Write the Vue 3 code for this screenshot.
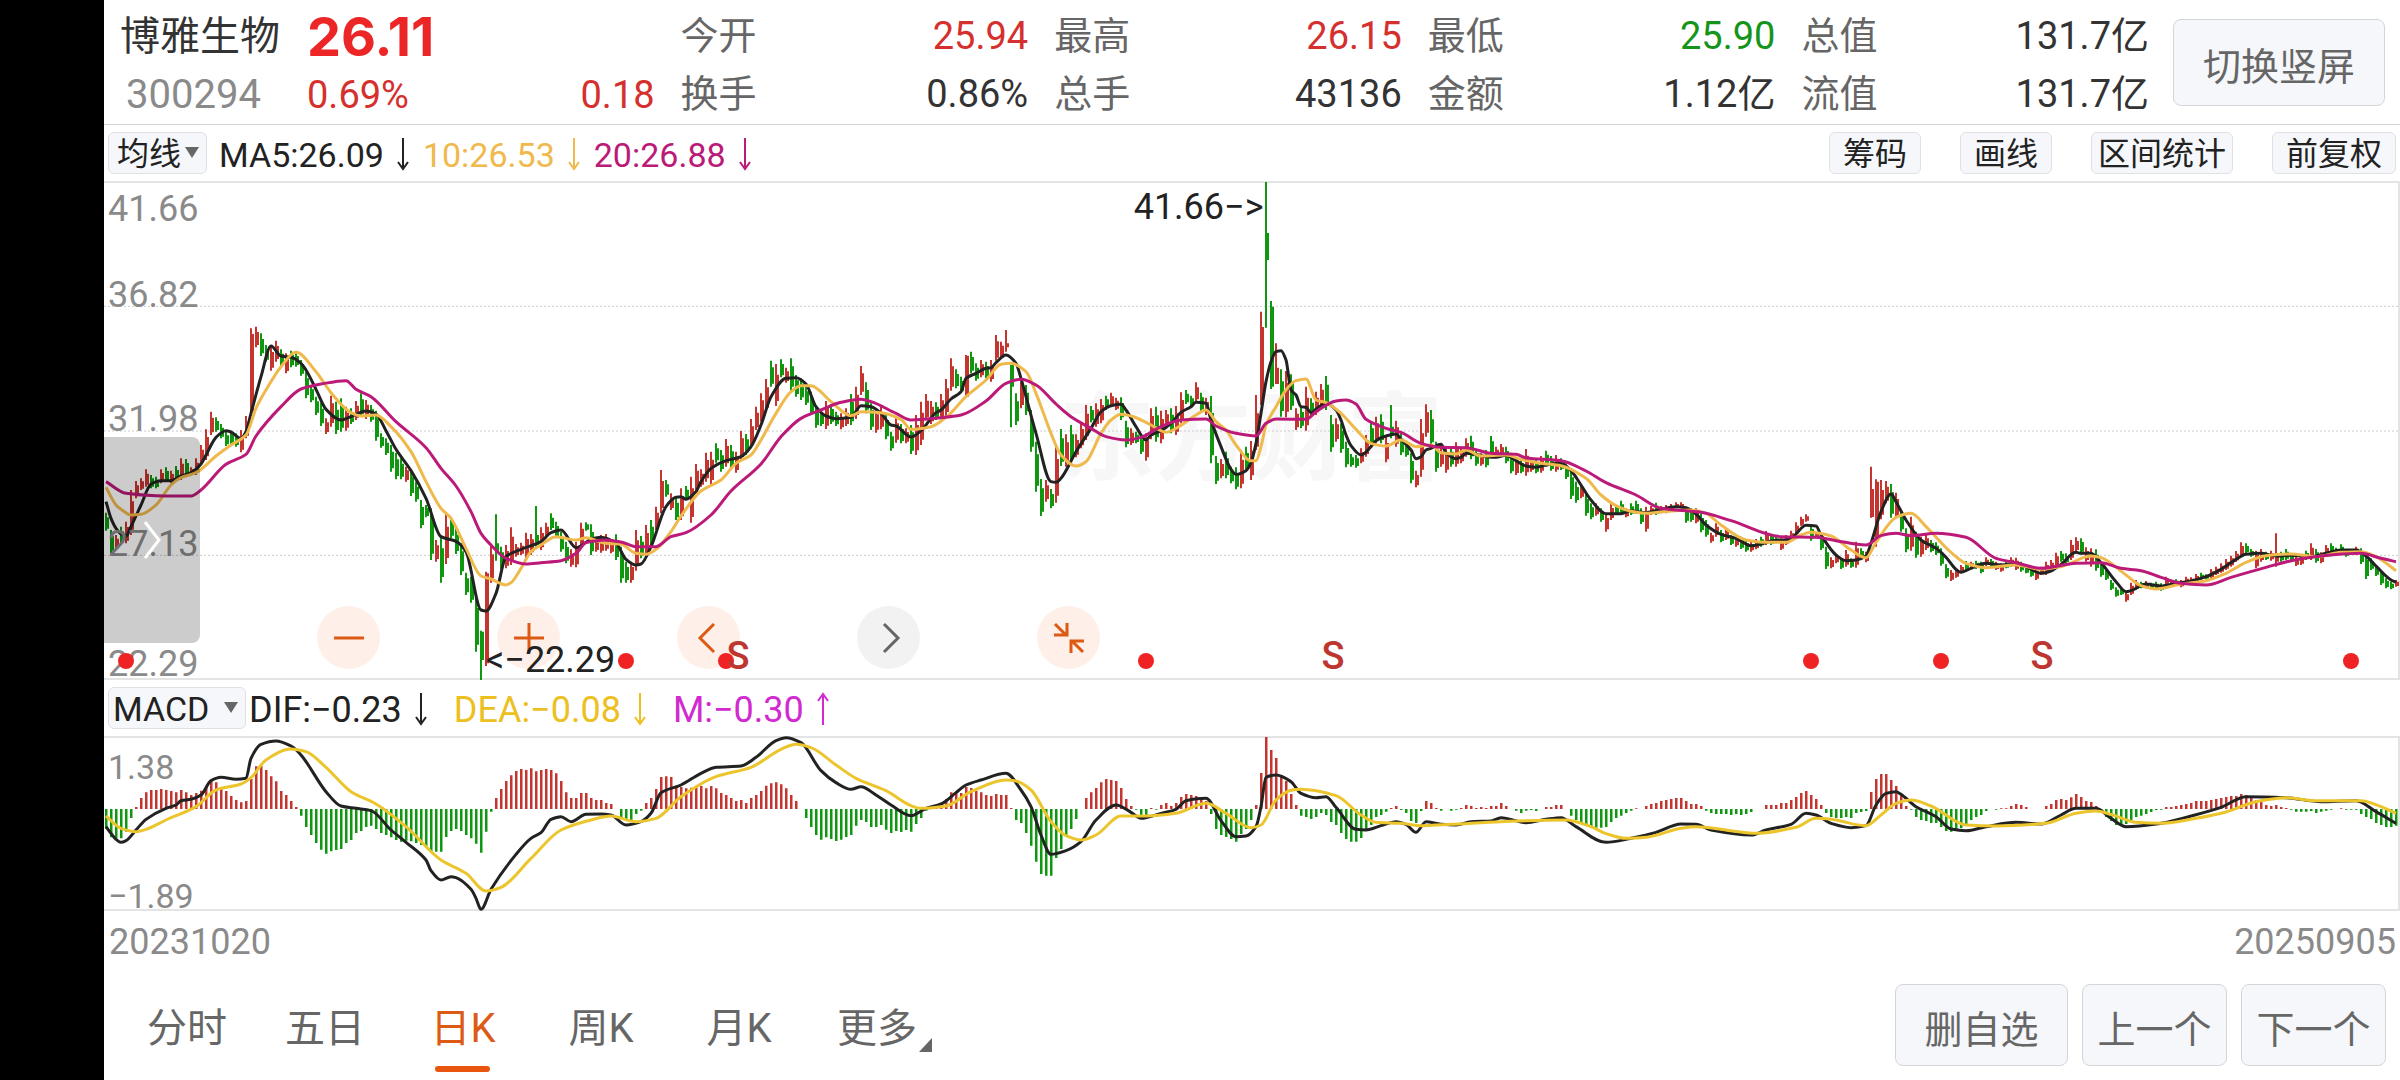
<template>
  <div class="screen">
    <main class="stock">
      <header class="quote">
        <div class="name">
          <h1>博雅生物</h1>
          <span>300294</span>
        </div>
        <div class="stats">
          <div class="current">
            <strong>26.11</strong>
            <p><span>0.69%</span><span>0.18</span></p>
          </div>
          <dl v-for="(col, i) in stats" :key="i">
            <div v-for="item in col" :key="item.label">
              <dt>{{ item.label }}</dt>
              <dd :class="item.tone">{{ item.value }}</dd>
            </div>
          </dl>
        </div>
        <button type="button" class="btn rotate">切换竖屏</button>
      </header>

      <section class="bar">
        <div class="picker">
          <select aria-label="主图指标">
            <option>均线</option>
          </select>
          <svg viewBox="0 0 14 11" class="caret"><path d="M0 0h14L7 11z" /></svg>
        </div>
        <p class="legend ma">
          <span v-for="item in maLegend" :key="item.text" :style="{ color: item.color }">
            {{ item.text }}
            <svg viewBox="0 0 14 34" class="arrow"><path d="M7 1v29M2 25l5 7 5-7" /></svg>
          </span>
        </p>
        <div class="tools">
          <button v-for="tool in tools" :key="tool" type="button" class="tool" :class="{ compact: tool.length > 3 }">{{ tool }}</button>
        </div>
      </section>

      <section class="chart price">
        <div class="watermark">东方财富</div>
        <svg class="plot" viewBox="0 9 2294 1485" preserveAspectRatio="none">
          <line v-for="y in [379, 753, 1126]" :key="y" class="grid" x1="0" x2="2294" :y1="y" :y2="y" />
          <path class="up" :d="candlePath('r')" />
          <path class="down" :d="candlePath('g')" />
          <path v-for="line in maLines" :key="line.color" class="line" :stroke="line.color" :d="curve(line.data)" />
        </svg>
        <span v-for="tick in ticks" :key="tick.text" class="tick" :style="{ top: tick.top + 'px' }">{{ tick.text }}</span>
        <div class="controls">
          <button type="button" aria-label="缩小"><svg viewBox="0 0 32 32"><path d="M1 16h30" /></svg></button>
          <button type="button" aria-label="放大"><svg viewBox="0 0 32 32"><path d="M1 16h30M16 1v30" /></svg></button>
          <button type="button" aria-label="左移"><svg viewBox="0 0 32 32"><path d="M21 2L7 16l14 14" /></svg></button>
          <button type="button" aria-label="右移" class="off"><svg viewBox="0 0 32 32"><path d="M11 2l14 14-14 14" /></svg></button>
          <button type="button" aria-label="收起"><svg viewBox="0 0 32 32"><path d="M2 2l11 11M1 13h13V1M30 30L19 19M31 19H18v12" /></svg></button>
        </div>
        <span v-for="n in dots" :key="'d' + n" class="dot" :style="{ left: barLeft(n) }"></span>
        <span v-for="n in sells" :key="'s' + n" class="sell" :style="{ left: barLeft(n) }">S</span>
        <span class="note high" :style="{ right: (100 - pct(231.5)) + '%' }">41.66−&gt;</span>
        <span class="note low" :style="{ left: pct(76) + '%' }">&lt;−22.29</span>
        <button type="button" class="drawer" aria-label="展开">
          <svg viewBox="0 0 18 38"><path d="M2 1l14 18L2 37" /></svg>
        </button>
      </section>

      <section class="bar">
        <div class="picker macd">
          <select aria-label="副图指标">
            <option>MACD</option>
          </select>
          <svg viewBox="0 0 14 11" class="caret"><path d="M0 0h14L7 11z" /></svg>
        </div>
        <p class="legend sub">
          <span v-for="item in macdLegend" :key="item.text" :style="{ color: item.color }">
            {{ item.text }}
            <svg viewBox="0 0 14 34" class="arrow"><path :d="item.up ? 'M7 33V4M2 9l5-7 5 7' : 'M7 1v29M2 25l5 7 5-7'" /></svg>
          </span>
        </p>
      </section>

      <section class="chart macd-chart">
        <svg class="plot" viewBox="0 174 2294 513" preserveAspectRatio="none">
          <path class="up" :d="histPath(1)" />
          <path class="down" :d="histPath(-1)" />
          <path class="line" stroke="#222" :d="curve(dif)" />
          <path class="line" stroke="#ecc52c" :d="curve(dea)" />
        </svg>
        <span class="tick small top">1.38</span>
        <span class="tick small bottom">−1.89</span>
      </section>

      <div class="dates">
        <time>20231020</time>
        <time>20250905</time>
      </div>

      <footer class="footer">
        <nav class="tabs">
          <a v-for="tab in tabs" :key="tab" href="#" :class="{ active: tab === activeTab, more: tab === '更多' }" @click.prevent="activeTab = tab">{{ tab }}</a>
        </nav>
        <div class="actions">
          <button type="button" class="btn wide">删自选</button>
          <button type="button" class="btn">上一个</button>
          <button type="button" class="btn">下一个</button>
        </div>
      </footer>
    </main>
  </div>
</template>

<script setup>
import { ref } from 'vue';

const stats = [
  [{ label: '今开', value: '25.94', tone: 'rise' }, { label: '换手', value: '0.86%' }],
  [{ label: '最高', value: '26.15', tone: 'rise' }, { label: '总手', value: '43136' }],
  [{ label: '最低', value: '25.90', tone: 'fall' }, { label: '金额', value: '1.12亿' }],
  [{ label: '总值', value: '131.7亿' }, { label: '流值', value: '131.7亿' }]
];
const maLegend = [
  { text: 'MA5:26.09', color: '#222' },
  { text: '10:26.53', color: '#efb94c' },
  { text: '20:26.88', color: '#bb1a78' }
];
const macdLegend = [
  { text: 'DIF:−0.23', color: '#222' },
  { text: 'DEA:−0.08', color: '#ecc01f' },
  { text: 'M:−0.30', color: '#d02ad0', up: true }
];
const tools = ['筹码', '画线', '区间统计', '前复权'];
const tabs = ['分时', '五日', '日K', '周K', '月K', '更多'];
const activeTab = ref('日K');

const ticks = [
  { text: '41.66', top: 6 },
  { text: '36.82', top: 92 },
  { text: '31.98', top: 216 },
  { text: '27.13', top: 341 },
  { text: '22.29', top: 461 }
];

// Event markers, by bar number
const dots = [4, 104, 124, 208, 341, 367, 449];
const sells = [126.4, 245.4, 387.2];

// Candles: [first bar, base, bars]. A bar is r (up) or g (down), high-low, then body if it is unusual
const candleData = [
  [0, 0, 'g998-1052 g1050-1120 r1065-1110 g1040-1095 r1025-1090 r930-1065 r903-955 r895-930 r868-920 g885-925 g890-925 r868-910 g862-905 r872-910 g858-905 r835-900 g837-885 r862-882 r835-885 r795-850'],
  [20, 0, 'r748-840 r695-765 g712-755 g732-775 g755-798 g752-798 g760-800 r750-817 r708-775 r445-692-462-692 r440-502 g460-528 g495-545 r497-572 r482-545 g508-560 r520-580 g512-562 g517-560 g540-587'],
  [40, 0, 'g575-655 g615-667 g650-705 g668-738 r715-762 r647-740 g665-762 g655-755 r680-752 g685-732 r663-720 g640-710 r660-717 g675-725 g692-782 g760-803 g775-825 g795-875 g818-898 g835-898'],
  [60, 0, 'r860-905 g870-948 g905-965 g960-1045 g975-1012 g985-1140 r1080-1145 g1070-1208 r1003-1152 g1010-1075 g1045-1122 g1090-1185 g1178-1245 g1190-1268 g1240-1415 g1352-1500-1355-1440 r1175-1458-1180-1450 r1095-1208 g1003-1142-1090-1115 g1100-1168'],
  [80, 0, 'r1095-1165 r1042-1155 r1092-1130 r1088-1125 r1058-1135 r1062-1125 g978-1100-1065-1095 r1042-1110 r1028-1075 g1000-1050 g1025-1075 g1055-1115 g1085-1150 r1108-1160 r1085-1162 r1028-1100 g1027-1052 g1033-1125 r1075-1115 r1065-1118'],
  [100, 0, 'r1062-1112 r1080-1120 g1063-1140 g1100-1208 g1145-1208 r1145-1208 r1050-1172 g1068-1135 r1035-1130 g1020-1100 r980-1050 r870-1000 g900-950 r940-990 g950-1020'],
  [115, 360, 'r565-660 g558-600 r530-668 r492-570 r508-560 r458-545 r455-552 g430-488 g450-515 r417-500 g435-510 r455-518 r393-482 g402-465 r357-445 r320-390 r280-365 r237-335 g182-260 r192-318'],
  [135, 360, 'g178-232 r203-248 g175-272 g225-290 g235-300 g260-315 g275-345 g320-383 g330-378 r303-387 g312-372 g335-378 r340-388 r325-378 g282-375 r260-357 r198-285 g247-340 g310-390 r325-398'],
  [155, 360, 'r320-388 g340-418 g395-452 r350-428 g372-430 r385-430 g375-462 r345-465 r305-435 r282-360 r303-372 g307-360 r282-357 r237-350 r175-272 g208-265 g230-280 r165-292-167-290 g155-220 g190-242'],
  [175, 360, 'r180-232 g185-235 r180-245 r105-182 r125-172 r90-155-130-142 g195-382-195-260 g280-375 r245-325 g255-345 g330-455 g425-575 g537-648 r540-605 g567-625 r433-608 g387-498 r403-500 g375-485 r403-472'],
  [195, 360, 'r367-445 r315-420 g318-367 r310-380 r297-370 g287-330 r278-320 r293-330 g292-360 g362-442 r385-435 g395-430 g405-462 r400-482 r325-418 g320-425 r332-430 r330-380 g325-400 r318-405'],
  [215, 360, 'r277-370 g270-312 g287-318 r247-305 g278-335 r293-345 g288-490 g468-552 r477-535 g455-535 g500-550 g502-568 r450-565 g440-515 r423-540'],
  [230, 0, 'r645-810-700-800 r395-675-441-672 g6-443-159-240 g363-627-380-620 r490-612-563-612 g568-710 r573-712 g583-690 r685-750 g680-745 r620-752 g655-705 r635-705 r612-680 g588-690'],
  [245, 0, 'g705-815 r715-785 g730-818 g785-862 g822-860 g825-863 r805-850 r765-830 g727-800 r710-790 g703-790 r770-847 g675-775-740-765 r722-800 g760-825 g790-830 g820-910 r872-922 r717-890 r673-770'],
  [265, 0, 'g690-800 g785-875 r800-860 r803-878 g800-860 r787-860 r800-850 r775-830 g767-838 g810-857 r820-857 g810-862 g768-832 r800-835 r792-830 g800-850 g828-880 r835-885 g838-880 r807-887'],
  [285, 0, 'r835-875 g840-880 r828-878 g812-860 g828-872 r825-875 g835-870 g850-897 g870-957 g905-968 r915-955 g940-1007 g970-1018 r970-1007'],
  [299, 600, 'g385-425 r400-455 r372-420 g378-402 g362-405 r385-412 g370-405 g362-402 g385-432 r380-455 r378-405 g368-405 r378-400 r375-400 r372-395 r367-385 r367-385 g380-428 g385-425 r385-430'],
  [319, 600, 'g400-457 g420-470 r458-488 r430-470 g450-487 r445-480 g465-495 r470-500 g470-507 g480-515 r485-515 r477-508 g470-500 r453-495 g462-495 g470-490 r475-510 r465-495 r452-485 r427-465'],
  [339, 600, 'r410-437 r403-425 g435-482 r455-475 g470-510 g500-567 r532-565 r525-550 g535-567 r510-560 g535-563 r485-563 g505-535 r515-547 r260-413-327-411 r298-500-305-478 r300-418 r303-370 g312-413 r338-415'],
  [359, 600, 'g395-455 g445-517 r410-512 g455-533 r470-530 r463-510 g480-517 g487-525 g505-557 g553-595 r570-603 r568-593 r555-580 g543-575 r545-565 g542-567 g545-580 r532-558 g537-560 r545-570'],
  [379, 600, 'r550-575 g545-565 r532-560 r533-570 g545-575 g560-580 g567-590 r565-600 r560-585 r545-585 r540-570 r518-560 g513-545 g520-550 r480-540 r472-515 g475-520 r502-545 r505-560 g508-572'],
  [399, 600, 'g550-590 g570-600 g600-630 g622-650 g625-645 r635-665 r608-645 r600-630 g605-625 r603-625 g608-628 g605-630 g610-632 r590-620 g600-620 g598-615 r600-622 r590-612 r592-608 r582-605'],
  [419, 600, 'g578-600 g583-598 r567-595 r560-585 r550-578 r537-570 r527-560 r513-545 r487-530 g490-520 g507-530 r512-565 r507-545 g515-540 r512-542 r460-560-520-545 g515-545 g507-540 g520-540 r527-558'],
  [439, 600, 'r525-555 g512-540 r490-540 g507-548 r517-550 r495-530 g490-520 g503-525 g493-520 g508-530 r507-522 r500-525 g505-552 g520-597 g535-570 g555-588 g570-615 g595-625 g605-628 r600-620']
];

// Lines: "bar:height" pairs
const maLines = [
  {
    color: '#222',
    data: '0:965 1:1015 2:1045 3:1062 4:1068 5:1040 7:975 9:912 11:902 13:902 15:888 17:878 19:852 20:825 22:772 24:752 25:756 27:775 28:755 29:700 31:590 33:498 35:528 37:532 39:550 40:570 42:628 44:688 47:720 49:710 52:693 54:702 56:752 58:808 61:872 64:955 67:1070 70:1084 72:1115 75:1290 76:1293 78:1240 80:1130 83:1108 87:1085 89:1058 91:1050 94:1103 97:1078 99:1072 102:1090 104:1138 106:1155 107:1152 109:1100 112:980 114:952 '
      + '115:950 116:958 118:935 119:905 121:865 124:842 127:830 129:800 131:735 133:650 136:595 138:593 140:612 142:680 144:708 146:716 149:712 151:677 153:680 155:700 157:735 158:738 161:771 163:752 166:698 167:690 169:657 171:635 172:595 174:580 176:565 177:563 178:548 180:525 182:550 183:595 184:650 186:760 189:905 190:907 191:895 194:815 197:745 199:695 201:677 203:673 204:690 206:740 208:780 209:765 211:752 213:730 215:697 217:680 218:667 220:670 221:720 223:800 225:868 226:883 228:872 229:848 '
      + '230:790 231:700 232:605 233:545 234:515 235:512 236:540 237:630 238:645 239:680 240:682 241:698 242:688 244:670 246:690 247:720 248:765 249:797 251:825 253:800 254:782 256:768 258:762 259:778 261:810 262:836 263:830 264:810 265:805 267:793 268:818 270:836 271:832 272:820 274:823 276:830 278:832 280:826 282:842 284:858 286:862 288:855 291:850 293:872 295:915 297:960 300:1001 303:1001 305:992 308:998 310:992 314:980 316:983 318:1002 320:1035 323:1063 326:1075 329:1097 331:1092 333:1083 337:1078 338:1062 340:1036 342:1038 343:1065 346:1125 348:1142 350:1140 352:1128 353:1090 355:995 357:942 358:965 360:1020 363:1080 366:1105 368:1132 370:1168 371:1177 373:1165 376:1150 379:1155 382:1150 384:1160 386:1175 387:1180 389:1173 391:1153 394:1117 395:1120 397:1120 399:1148 402:1205 404:1235 405:1232 408:1212 411:1218 414:1210 417:1203 420:1190 423:1168 426:1138 428:1123 431:1120 434:1128 437:1126 441:1130 444:1120 447:1110 450:1110 452:1128 454:1158 457:1200 458:1207'
  },
  {
    color: '#efb94c',
    data: '0:922 2:975 3:988 5:1005 7:1003 10:975 13:915 15:893 18:878 22:828 25:795 28:765 30:685 32:630 35:560 38:517 42:575 45:638 49:698 51:708 54:705 57:740 61:815 64:905 67:985 69:1015 72:1105 75:1188 77:1197 80:1215 81:1208 83:1165 85:1115 87:1095 90:1070 94:1080 96:1073 100:1090 103:1093 106:1120 108:1123 110:1108 113:1055 115:1008 119:933 123:900 126:850 129:825 131:780 134:700 137:635 139:617 141:617 145:665 149:707 151:695 155:698 159:718 161:748 165:740 168:712 172:650 176:600 179:553 181:550 184:575 186:640 189:760 191:825 194:858 196:845 199:760 201:720 203:703 205:708 209:735 212:757 214:745 218:705 220:690 222:725 224:750 226:795 229:842 230:842 231:800 232:735 234:680 236:630 238:602 240:597 242:660 244:668 247:700 250:748 253:790 256:798 259:780 262:800 265:795 267:818 270:822 272:810 275:828 280:825 283:838 287:850 291:857 296:895 299:945 302:977 305:994 308:1000 313:993 317:990 320:1000 323:1035 328:1080 332:1087 336:1087 339:1065 341:1057 345:1068 349:1110 352:1133 354:1087 358:1012 361:1000 364:1040 369:1117 372:1150 376:1163 382:1155 387:1168 391:1160 397:1128 399:1133 404:1185 407:1217 410:1227 415:1212 420:1202 424:1180 428:1147 432:1127 437:1122 442:1130 447:1117 451:1115 454:1130 458:1172'
  },
  {
    color: '#bb1a78',
    data: '0:905 4:940 10:947 17:948 19:930 24:853 28:823 30:768 35:680 39:627 43:612 48:602 50:628 53:650 58:725 64:803 67:865 70:918 73:995 75:1060 77:1095 80:1135 84:1152 87:1148 91:1142 94:1120 96:1088 100:1080 103:1086 106:1100 110:1100 113:1070 116:1058 121:1005 125:933 131:852 135:770 139:715 143:690 147:667 151:658 153:665 158:700 161:720 167:713 171:705 176:663 180:610 183:598 186:615 190:672 193:710 197:745 200:770 204:780 207:772 211:740 215:720 220:717 222:738 226:760 230:768 232:730 234:717 240:718 242:695 246:663 248:660 250:672 252:718 256:745 259:757 263:790 267:802 272:803 277:820 282:823 284:834 291:842 296:873 300:908 306:945 311:985 319:997 325:1022 335:1070 342:1072 346:1082 352:1095 355:1067 358:1060 361:1067 366:1060 372:1072 378:1135 382:1148 387:1165 394:1150 399:1148 403:1165 407:1172 411:1192 415:1210 420:1215 425:1192 432:1162 438:1139 445:1125 451:1120 455:1135 458:1145'
  }
];
const dif = '0:440 1:460 2:478 3:487 4:482 6:450 8:418 12:385 14:375 15:362 17:358 19:345 21:302 23:292 26:298 28:295 29:235 31:193 34:183 37:198 39:225 44:335 47:378 50:385 53:392 57:450 60:487 64:540 65:572 67:600 69:590 70:593 73:628 74:655 75:688 77:628 82:523 85:475 87:458 89:418 91:410 93:425 96:403 99:402 101:405 104:435 107:425 109:400 111:338 115:315 119:280 122:262 127:258 130:232 134:182 136:173 139:188 143:272 146:308 149:328 151:320 154:345 157:375 161:407 164:385 167:372 170:338 172:315 175:300 180:280 183:330 185:380 187:465 189:523 192:512 195:485 198:420 202:375 205:397 207:415 211:400 214:388 216:362 220:355 223:422 226:470 228:468 230:440 231:380 232:292 234:285 237:305 239:340 242:353 244:350 246:382 250:448 252:450 255:437 258:425 260:433 262:457 264:425 267:433 270:435 273:425 277:423 279:413 284:428 288:418 291:413 294:440 300:487 305:475 310:457 315:432 318:433 321:450 329:465 332:450 337:433 340:400 342:405 345:430 349:443 352:437 354:375 356:340 358:335 359:343 362:380 366:410 369:447 372:452 376:440 382:427 387:432 391:405 394:385 398:385 401:415 404:440 411:430 417:408 423:382 428:350 436:353 443:365 450:362 454:395 458:430';
const dea = '0:408 3:445 6:455 8:448 12:420 18:380 22:330 27:312 29:293 32:240 37:207 40:215 44:262 49:335 54:372 60:440 67:540 72:580 76:633 79:622 85:535 91:450 97:420 101:408 106:425 110:415 115:350 122:290 129:262 135:208 138:193 141:203 146:255 150:295 156:332 161:377 163:385 168:378 173:335 180:300 182:303 185:330 189:425 192:467 195:480 198:465 203:408 208:408 214:400 220:370 224:400 229:443 231:435 234:360 237:331 239:328 246:347 251:405 254:427 259:430 263:437 269:433 279:425 292:420 297:440 300:461 304:475 308:472 315:445 318:440 325:452 330:460 338:442 342:415 345:418 352:437 355:405 358:370 361:360 365:378 372:435 378:438 388:430 394:400 398:393 401:403 406:427 411:430 418:415 424:396 430:365 436:353 442:362 451:362 455:380 458:400';

const hist = [
  -60, -85, -88, -88, -68, -27, 6, 33, 50, 57, 57, 60, 57, 54, 50, 57, 50, 42, 48, 55,
  68, 83, 80, 66, 54, 39, 27, 20, 24, 90, 128, 130, 117, 98, 83, 54, 42, 24, 6, -20,
  -54, -78, -102, -122, -134, -127, -123, -120, -102, -93, -72, -66, -54, -50, -60, -72, -78, -85, -93, -98,
  -95, -97, -102, -108, -113, -128, -128, -128, -84, -66, -60, -66, -78, -88, -104, -131, -68, -8, 33, 60,
  84, 101, 114, 120, 117, 122, 113, 117, 120, 117, 107, 84, 50, 33, 33, 48, 48, 33, 27, 27,
  18, 15, 0, -24, -33, -35, -15, -5, 18, 33, 60, 96, 98, 96, 70, 66, 62, 64, 66, 69,
  62, 69, 62, 48, 42, 33, 24, 27, 18, 33, 42, 54, 70, 77, 80, 74, 62, 42, 24, 0,
  -27, -54, -78, -92, -85, -90, -96, -92, -84, -78, -50, -33, -39, -54, -54, -48, -62, -72, -66, -69,
  -63, -68, -45, -27, -5, 6, 9, 15, 30, 50, 50, 48, 66, 63, 54, 50, 42, 39, 45, 42,
  42, 3, -33, -42, -72, -110, -158, -195, -200, -200, -147, -120, -80, -60, -30, 0, 33, 50, 63, 80,
  90, 87, 84, 63, 30, 9, -2, -18, -18, 3, -2, 12, 18, 9, 18, 36, 45, 42, 39, 33,
  24, -15, -60, -78, -84, -90, -98, -75, -60, -33, 12, 108, 216, 177, 153, 96, 84, 45, 12, -20,
  -24, -30, -24, -12, -18, -39, -48, -72, -90, -98, -98, -87, -60, -48, -24, -18, -8, 3, 9, -3,
  -12, -36, -42, -6, 24, 18, 3, -5, 0, -5, -2, 3, 12, 9, 3, 6, 3, 9, 9, 18,
  9, 0, -5, -12, -5, -3, -6, 0, 6, 6, 12, 12, 0, -20, -33, -42, -45, -54, -56, -56,
  -54, -39, -27, -20, -12, -5, 2, 0, 9, 15, 18, 24, 27, 30, 33, 33, 24, 15, 15, 9,
  -5, -12, -15, -15, -15, -18, -15, -18, -15, -9, 0, 0, 12, 12, 12, 18, 18, 27, 36, 48,
  54, 42, 30, 12, -12, -24, -27, -27, -24, -27, -12, -9, -6, 51, 90, 105, 105, 87, 69, 45,
  9, -2, -24, -33, -36, -42, -42, -54, -66, -68, -66, -57, -45, -33, -24, -18, -6, 0, -2, 2,
  2, 9, 15, 12, 6, 0, 0, 0, 9, 15, 27, 30, 27, 35, 45, 36, 24, 21, 9, -12,
  -24, -36, -48, -48, -45, -33, -24, -20, -15, -9, -3, -2, 6, 6, 9, 12, 15, 18, 24, 24,
  24, 27, 30, 33, 36, 39, 39, 45, 42, 39, 27, 21, 12, 9, 12, 6, 3, -2, -8, -8,
  -8, -6, -12, -8, -5, -2, 0, 2, -2, -2, -2, -15, -24, -30, -42, -48, -54, -54, -50
];

const barX = (n) => 2 + n * 5;
const pct = (n) => (barX(n) / 2294) * 100;
const barLeft = (n) => pct(n) + '%';
const rect = (x, w, y1, y2) => `M${x.toFixed(1)} ${y1}h${w}V${y2}h${-w}z`;

const candles = candleData.flatMap(([first, base, text]) =>
  text.split(' ').map((item, i) => {
    const [high, low, top, bottom] = item.slice(1).split('-').map((v) => Number(v) + base);
    const range = low - high;
    return {
      dir: item[0],
      x: barX(first + i),
      high,
      low,
      top: top ?? Math.round(high + range * 0.25),
      bottom: bottom ?? Math.round(low - range * 0.12)
    };
  })
);

const candlePath = (dir) => candles
  .filter((c) => c.dir === dir)
  .map((c) => rect(c.x - 1, 2, c.high, c.low) + rect(c.x - 1, 4, c.top, c.bottom))
  .join('');

const histPath = (sign) => hist
  .map((v, i) => (v * sign > 0 ? rect(barX(i) - 1, 2.5, 387, 387 - v) : ''))
  .join('');

// Smooth curve through the points that never overshoots them
const curve = (data) => {
  const pts = data.split(' ').map((pair) => {
    const [n, y] = pair.split(':').map(Number);
    return [barX(n), y];
  });
  const slope = (i) => (pts[i + 1][1] - pts[i][1]) / (pts[i + 1][0] - pts[i][0]);
  const tangent = pts.map((p, i) => {
    if (i === 0) return slope(0);
    if (i === pts.length - 1) return slope(i - 1);
    const a = slope(i - 1);
    const b = slope(i);
    return a * b <= 0 ? 0 : (2 * a * b) / (a + b);
  });
  let d = `M${pts[0][0]} ${pts[0][1]}`;
  for (let i = 1; i < pts.length; i++) {
    const [x0, y0] = pts[i - 1];
    const [x1, y1] = pts[i];
    const dx = (x1 - x0) / 3;
    d += `C${(x0 + dx).toFixed(1)} ${(y0 + tangent[i - 1] * dx).toFixed(1)} ${(x1 - dx).toFixed(1)} ${(y1 - tangent[i] * dx).toFixed(1)} ${x1} ${y1}`;
  }
  return d;
};
</script>

<style>
body {
  margin: 0;
  background: #000;
}
</style>

<style scoped>
.screen {
  min-height: 100vh;
  padding-left: 104px;
  box-sizing: border-box;
  background: #000;
  display: flex;
  font-family: Roboto, "Noto Sans CJK SC", sans-serif;
  color: #333;
}

.stock {
  flex: 1;
  min-width: 0;
  background: #fff;
}

h1, p, dl, dd {
  margin: 0;
}

button, select {
  font-family: inherit;
  color: inherit;
  margin: 0;
}

/* Quote header */
.quote {
  height: 124px;
  display: flex;
  align-items: flex-start;
  border-bottom: 1px solid #d5d5d5;
}

.name {
  flex: none;
  width: 187px;
  padding: 8px 0 0 16px;
  line-height: 58px;
  font-size: 40px;
}

.name h1 {
  font-size: 40px;
  font-weight: 400;
}

.name span {
  padding-left: 6px;
  color: #8a8a8a;
}

.stats {
  flex: 1;
  display: grid;
  grid-template-columns: repeat(5, 1fr);
  column-gap: 26px;
  font-size: 38px;
  line-height: 58px;
}

.stats dl {
  padding-top: 7px;
}

.stats dl div, .current p {
  display: flex;
  justify-content: space-between;
}

.current {
  padding-top: 8px;
  color: #d5302d;
}

.current strong {
  display: block;
  font: 700 54px/58px Inter, sans-serif;
  color: #ec2626;
}

dt {
  color: #666;
}

.rise {
  color: #d5302d;
}

.fall {
  color: #14941a;
}

.btn {
  height: 82px;
  min-width: 145px;
  padding: 2px 0 0;
  border: 1px solid #d3d6d9;
  border-radius: 8px;
  background: #f6f7fa;
  color: #666;
  font-size: 38px;
}

.btn.rotate {
  flex: none;
  width: 212px;
  height: 87px;
  margin: 19px 15px 0 24px;
}

/* Indicator bars */
.bar {
  height: 56px;
  padding: 0 4px;
  display: flex;
  align-items: center;
}

.picker {
  position: relative;
  width: 99px;
  height: 42px;
  flex: none;
}

.picker select {
  appearance: none;
  width: 100%;
  height: 42px;
  padding: 2px 0 0 8px;
  border: 1px solid #dfe1e4;
  border-radius: 6px;
  background: #f6f7fa;
  color: #222;
  font-size: 32px;
  line-height: 38px;
}

.caret {
  position: absolute;
  top: 15px;
  right: 8px;
  width: 14px;
  height: 11px;
  fill: #666;
  pointer-events: none;
}

.picker.macd {
  width: 138px;
}

.picker.macd select {
  padding-left: 4px;
  font-size: 34px;
}

.legend {
  display: flex;
  padding-top: 4px;
  font-size: 34px;
  line-height: 50px;
}

.legend span {
  display: flex;
  align-items: center;
  white-space: nowrap;
}

.legend.ma {
  gap: 13px;
  padding-left: 12px;
}

.legend.sub {
  gap: 26px;
  padding-left: 3px;
  font-size: 36px;
}

.arrow {
  width: 14px;
  height: 34px;
  margin: 0 0 2px 12px;
  fill: none;
  stroke: currentColor;
  stroke-width: 2;
}

.tools {
  margin-left: auto;
  display: flex;
  gap: 39px;
}

.tool {
  height: 42px;
  padding: 2px 13px 0;
  border: 1px solid #dfe1e4;
  border-radius: 6px;
  background: #f6f7fa;
  color: #222;
  font-size: 32px;
  line-height: 36px;
}

.tool.compact {
  padding: 2px 6px 0;
}

/* Charts */
.chart {
  position: relative;
  border: 2px solid #e4e4e4;
  border-left: 0;
}

.price {
  height: 495px;
}

.macd-chart {
  height: 171px;
}

.plot {
  position: relative;
  display: block;
  width: 100%;
  height: 100%;
  overflow: visible;
}

.grid {
  stroke: #ccc;
  stroke-width: 1;
  stroke-dasharray: 2 2;
  vector-effect: non-scaling-stroke;
}

.up {
  fill: #c5352f;
}

.down {
  fill: #0f970f;
}

.line {
  fill: none;
  stroke-width: 3;
  stroke-linejoin: round;
  vector-effect: non-scaling-stroke;
}

.watermark {
  position: absolute;
  inset: 0;
  display: flex;
  align-items: center;
  justify-content: center;
  font-size: 96px;
  font-weight: 700;
  color: #f7f7f7;
}

.tick, .note {
  position: absolute;
  left: 4px;
  font-size: 36px;
  line-height: 40px;
  color: #8a8a8a;
  white-space: nowrap;
}

.tick.small {
  font-size: 34px;
}

.tick.small.top {
  top: 9px;
}

.tick.small.bottom {
  bottom: -7px;
}

.note {
  color: #222;
  pointer-events: none;
}

.note.high {
  top: 4px;
  left: auto;
}

.note.low {
  bottom: -2px;
}

.controls {
  position: absolute;
  left: 213px;
  bottom: 9px;
  display: flex;
  gap: 117px;
}

.controls button {
  width: 63px;
  height: 63px;
  padding: 0;
  border: 0;
  border-radius: 50%;
  background: rgba(250, 110, 30, 0.1);
  color: #dc5a14;
  display: grid;
  place-items: center;
}

.controls .off {
  background: #f2f2f2;
  color: #666;
}

.controls svg {
  width: 32px;
  height: 32px;
  fill: none;
  stroke: currentColor;
  stroke-width: 3;
}

.dot {
  position: absolute;
  bottom: 9px;
  width: 16px;
  height: 16px;
  border-radius: 50%;
  background: #ef2323;
  transform: translateX(-50%);
}

.sell {
  position: absolute;
  bottom: 2px;
  transform: translateX(-50%);
  font-size: 38px;
  font-weight: 500;
  line-height: 40px;
  color: #bd3630;
}

.drawer {
  position: absolute;
  left: 0;
  top: 254px;
  width: 96px;
  height: 206px;
  padding: 0;
  border: 0;
  border-radius: 0 8px 8px 0;
  background: rgba(0, 0, 0, 0.2);
  display: grid;
  place-items: center;
}

.drawer svg {
  width: 18px;
  height: 38px;
  fill: none;
  stroke: #fff;
  stroke-width: 3;
}

/* Bottom */
.dates {
  display: flex;
  justify-content: space-between;
  padding: 3px 4px 0 5px;
  font-size: 36px;
  line-height: 56px;
  color: #8a8a8a;
}

.footer {
  display: flex;
  justify-content: space-between;
  padding: 14px 14px 14px;
}

.tabs {
  display: grid;
  grid-template-columns: repeat(6, 138px);
}

.tabs a {
  position: relative;
  padding-top: 4px;
  color: #666;
  font-size: 40px;
  line-height: 82px;
  text-align: center;
  text-decoration: none;
}

.tabs .active {
  color: #dc5a14;
}

.tabs .active::after {
  content: "";
  position: absolute;
  left: 50%;
  bottom: -2px;
  width: 55px;
  height: 6px;
  margin-left: -28px;
  border-radius: 3px;
  background: #e8550f;
}

.tabs .more::after {
  content: "";
  position: absolute;
  right: 14px;
  bottom: 18px;
  border-left: 13px solid transparent;
  border-bottom: 14px solid #666;
}

.actions {
  display: flex;
  gap: 14px;
}

.actions .wide {
  min-width: 173px;
}
</style>
